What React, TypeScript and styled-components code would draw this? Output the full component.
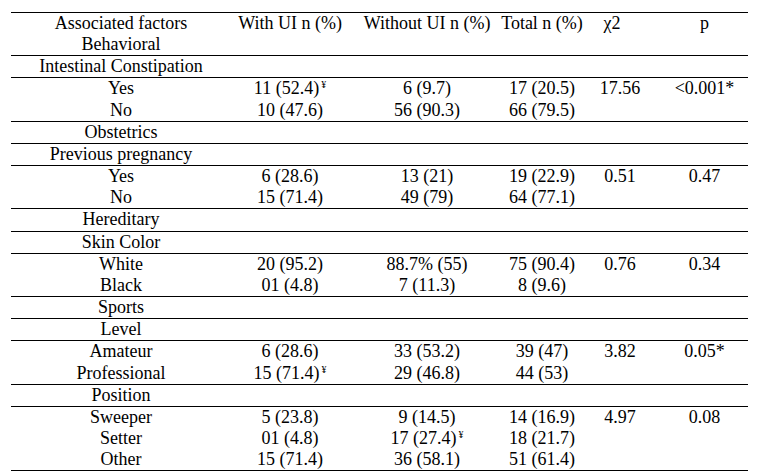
import styled, { createGlobalStyle } from "styled-components";

const GlobalStyle = createGlobalStyle`
  body {
    margin: 0;
    background: #ffffff;
  }
`;

const Page = styled.div`
  padding: 12px 0 0 11px;
  font-family: "Liberation Serif", "DejaVu Serif", serif;
  font-size: 18px;
  color: #000000;
`;

const Table = styled.div`
  width: 737px;
  border-top: 1px solid #000000;
`;

const Group = styled.div`
  border-bottom: 1px solid #000000;
`;

const Line = styled.div`
  display: grid;
  grid-template-columns: 220px 118px 156px 74px 82px 87px;
`;

const Cell = styled.div<{ $shift?: number }>`
  display: flex;
  flex-direction: column;
  align-items: center;
  white-space: nowrap;
  line-height: 21.15px;
  min-height: 21.15px;
  padding-right: ${(p) => (p.$shift ? `${p.$shift}px` : "0")};
`;

const Mark = styled.sup`
  font-size: 10px;
  line-height: 0;
  vertical-align: 6px;
  margin-left: 2px;
`;

type Row = string[];

const groups: Row[][] = [
  [["Intestinal Constipation"]],
  [
    ["Yes", "11 (52.4)¥", "6 (9.7)", "17 (20.5)", "17.56", "<0.001*"],
    ["No", "10 (47.6)", "56 (90.3)", "66 (79.5)"],
  ],
  [["Obstetrics"]],
  [["Previous pregnancy"]],
  [
    ["Yes", "6 (28.6)", "13 (21)", "19 (22.9)", "0.51", "0.47"],
    ["No", "15 (71.4)", "49 (79)", "64 (77.1)"],
  ],
  [["Hereditary"]],
  [["Skin Color"]],
  [
    ["White", "20 (95.2)", "88.7% (55)", "75 (90.4)", "0.76", "0.34"],
    ["Black", "01 (4.8)", "7 (11.3)", "8 (9.6)"],
  ],
  [["Sports"]],
  [["Level"]],
  [
    ["Amateur", "6 (28.6)", "33 (53.2)", "39 (47)", "3.82", "0.05*"],
    ["Professional", "15 (71.4)¥", "29 (46.8)", "44 (53)"],
  ],
  [["Position"]],
  [
    ["Sweeper", "5 (23.8)", "9 (14.5)", "14 (16.9)", "4.97", "0.08"],
    ["Setter", "01 (4.8)", "17 (27.4)¥", "18 (21.7)"],
    ["Other", "15 (71.4)", "36 (58.1)", "51 (61.4)"],
  ],
];

function Value({ text }: { text: string }) {
  if (text.endsWith("¥")) {
    return (
      <span>
        {text.slice(0, -1)}
        <Mark>¥</Mark>
      </span>
    );
  }
  return <span>{text}</span>;
}

export default function App() {
  return (
    <>
      <GlobalStyle />
      <Page>
        <Table>
          <Group>
            <Line>
              <Cell>
                <span>Associated factors</span>
                <span>Behavioral</span>
              </Cell>
              <Cell>With UI n (%)</Cell>
              <Cell>Without UI n (%)</Cell>
              <Cell>Total n (%)</Cell>
              <Cell $shift={16}>χ2</Cell>
              <Cell>p</Cell>
            </Line>
          </Group>
          {groups.map((rows, g) => (
            <Group key={g}>
              {rows.map((row, r) => (
                <Line key={r}>
                  {Array.from({ length: 6 }).map((_, c) => (
                    <Cell key={c}>{row[c] ? <Value text={row[c]} /> : null}</Cell>
                  ))}
                </Line>
              ))}
            </Group>
          ))}
        </Table>
      </Page>
    </>
  );
}
